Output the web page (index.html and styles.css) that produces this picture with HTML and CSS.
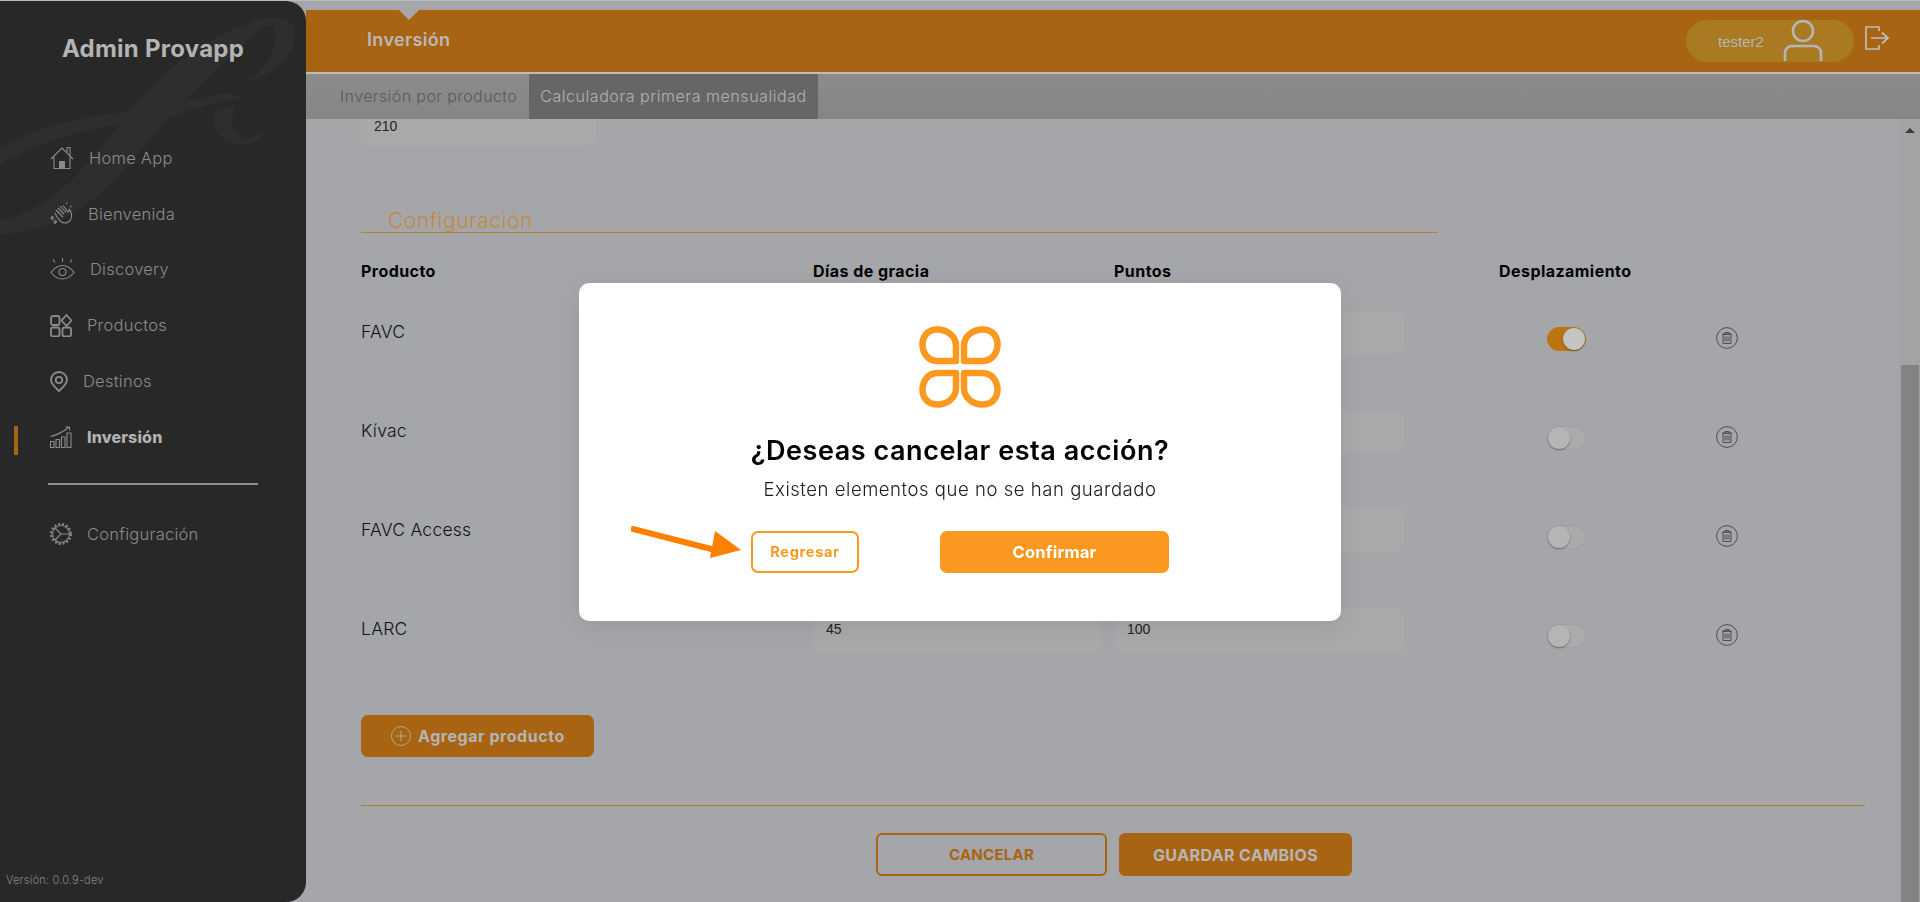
FILE: index.html
```html
<!DOCTYPE html>
<html lang="es">
<head>
<meta charset="utf-8">
<title>Admin Provapp</title>
<link rel="stylesheet" href="styles.css">
</head>
<body>
<div class="app">
  <aside class="sidebar">
    <svg class="watermark" width="306" height="260" viewBox="0 0 306 260" aria-hidden="true">
      <path d="M0 220C50 210 90 165 127 112C160 75 200 35 262 18C285 12 298 22 295 37C292 57 270 76 247 80C265 70 278 50 275 30C274 22 268 22 258 30C230 55 195 90 165 120C125 170 80 232 0 233Z"/>
      <path d="M0 147C45 120 110 112 170 105C195 98 215 92 228 92L247 97C225 100 200 105 168 117C125 122 60 128 0 163Z"/>
      <path d="M214 110C212 125 215 140 240 144C255 145 265 135 268 125C262 135 250 140 242 136C230 128 230 118 236 104Z"/>
    </svg>
    <h1 class="brand">Admin Provapp</h1>
    <nav class="nav">
      <a class="nav-item">
        <svg class="ico" width="24" height="24" viewBox="0 0 24 24"><path d="M1 13 12 2l11 11M4 11v11.500h16V11M17 6V1.500h3V9"/><path class="fill" d="M9 15h6v7.500H9z"/></svg>
        <span>Home App</span>
      </a>
      <a class="nav-item">
        <svg class="ico" width="23" height="23" viewBox="0 0 23 23"><path d="M8 6l6 6M6 8l7 7M10 4l6 6.500M13 3.500l5 6.500 1.500-2.500 2 4c1 5-2 9.500-6.500 9.500-3.500 0-5-2-8-6L5 11"/><path d="M2 14.500l-1 2 1.500 1 1-2zM5 18.500l-1 2 1.500 1 1-2zM16 2l1-1.500M20 5l1.500-1"/></svg>
        <span>Bienvenida</span>
      </a>
      <a class="nav-item">
        <svg class="ico" width="25" height="22" viewBox="0 0 25 22"><path d="M1 14.500C5 9 9 7.500 12.500 7.500S20 9 24 14.500C20 19.500 16 21 12.500 21S5 19.500 1 14.500Z"/><circle cx="12.500" cy="14" r="3.500"/><path d="M12.500 0v4M3 1.500l2 3M22 1.500l-2 3"/></svg>
        <span>Discovery</span>
      </a>
      <a class="nav-item">
        <svg class="ico ico-thick" width="22" height="23" viewBox="0 0 22 23"><rect x="1" y="2" width="8.500" height="9" rx="2"/><rect x="1" y="13.500" width="8.500" height="9" rx="2"/><rect x="12.500" y="13.500" width="8.500" height="9" rx="2"/><path d="M16.500 1 21.500 6.500 16.500 12 11.500 6.500Z"/></svg>
        <span>Productos</span>
      </a>
      <a class="nav-item">
        <svg class="ico ico-thick" width="18" height="21" viewBox="0 0 18 21"><path d="M9 20C5 16 1 13 1 9a8 8 0 0 1 16 0c0 4-4 7-8 11Z"/><circle cx="9" cy="9" r="3.200"/></svg>
        <span>Destinos</span>
      </a>
      <a class="nav-item is-active">
        <svg class="ico" width="22" height="22" viewBox="0 0 22 22"><path d="M.5 15.500h3.500v6H.5zM6 13.500h3.500v8H6zM11.500 11h3.500v10.500h-3.500zM17 7h4v14.500h-4z"/><path d="M.5 10.500C7 9 13 6 19 1M15.500 1H19.500V4.500"/></svg>
        <span>Inversión</span>
      </a>
      <div class="nav-rule"></div>
      <a class="nav-item">
        <svg class="ico" width="22" height="22" viewBox="0 0 22 22"><circle cx="11" cy="11" r="8.500"/><circle class="teeth" cx="11" cy="11" r="10"/><path d="M11 11 5 5M11 11 5 17M11 11h9"/></svg>
        <span>Configuración</span>
      </a>
    </nav>
    <p class="version">Versión: 0.0.9-dev</p>
  </aside>

  <main class="main">
    <header class="topbar">
      <span class="notch"></span>
      <h2 class="topbar-title">Inversión</h2>
      <div class="user-pill">
        <span class="user-name">tester2</span>
        <svg class="user-ico" width="40" height="42" viewBox="0 0 40 42"><circle cx="20" cy="12" r="10"/><path d="M2 42v-8c0-4 3-7 7-7h22c4 0 7 3 7 7v8"/></svg>
      </div>
      <svg class="logout" width="24" height="24" viewBox="0 0 24 24"><path d="M14 5V1H1v22h13v-4"/><path d="M6 12h16M17 6.500l6 5.500-6 5.500"/></svg>
    </header>
    <div class="tabs">
      <a class="tab">Inversión por producto</a>
      <a class="tab is-current">Calculadora primera mensualidad</a>
    </div>
    <div class="body-row">
      <section class="content">
        <div class="field field-top">210</div>
        <h3 class="section-title">Configuración</h3>
        <div class="table">
          <div class="th">Producto</div><div class="th">Días de gracia</div><div class="th">Puntos</div><div class="th">Desplazamiento</div><div class="th"></div>

          <div class="cell-name">FAVC</div><div class="field"></div><div class="field field-wide"></div>
          <div class="cell-toggle"><span class="toggle is-on"><i></i></span></div>
          <svg class="trash" width="22" height="22" viewBox="0 0 22 22"><circle cx="11" cy="11" r="10.400"/><path d="M6 7h10M9 7V5.500h4V7M7 7.500h8V16.500H7zM9 9.500v5M11 9.500v5M13 9.500v5"/></svg>

          <div class="cell-name">Kívac</div><div class="field"></div><div class="field field-wide"></div>
          <div class="cell-toggle"><span class="toggle"><i></i></span></div>
          <svg class="trash" width="22" height="22" viewBox="0 0 22 22"><circle cx="11" cy="11" r="10.400"/><path d="M6 7h10M9 7V5.500h4V7M7 7.500h8V16.500H7zM9 9.500v5M11 9.500v5M13 9.500v5"/></svg>

          <div class="cell-name">FAVC Access</div><div class="field"></div><div class="field field-wide"></div>
          <div class="cell-toggle"><span class="toggle"><i></i></span></div>
          <svg class="trash" width="22" height="22" viewBox="0 0 22 22"><circle cx="11" cy="11" r="10.400"/><path d="M6 7h10M9 7V5.500h4V7M7 7.500h8V16.500H7zM9 9.500v5M11 9.500v5M13 9.500v5"/></svg>

          <div class="cell-name">LARC</div><div class="field">45</div><div class="field field-wide">100</div>
          <div class="cell-toggle"><span class="toggle"><i></i></span></div>
          <svg class="trash" width="22" height="22" viewBox="0 0 22 22"><circle cx="11" cy="11" r="10.400"/><path d="M6 7h10M9 7V5.500h4V7M7 7.500h8V16.500H7zM9 9.500v5M11 9.500v5M13 9.500v5"/></svg>
        </div>
        <button class="btn-add">
          <svg width="20" height="20" viewBox="0 0 20 20"><circle cx="10" cy="10" r="9.500"/><path d="M10 4.500v11M4.500 10h11"/></svg>
          Agregar producto
        </button>
        <div class="rule"></div>
        <div class="actions">
          <button class="btn btn-outline">CANCELAR</button>
          <button class="btn btn-solid">GUARDAR CAMBIOS</button>
        </div>
      </section>
      <div class="scrollbar"><span class="scroll-up"></span><span class="scroll-thumb"></span></div>
    </div>
  </main>
</div>

<div class="backdrop">
  <div class="modal">
    <svg class="arrow" width="112" height="34" viewBox="0 0 112 34"><path d="M0 2.500 L88 25" /><path class="arrow-head" d="M84 5 110 24 79 32Z"/></svg>
    <svg class="logo" width="82" height="82" viewBox="0 0 82 82">
      <path d="M37 35H18.500C9 35 3.500 27 3.500 18.500C3.500 9.500 9.500 3.500 18.500 3.500C28 3.500 37 10 37 20Z"/>
      <path d="M45 35H63.500C73 35 78.500 27 78.500 18.500C78.500 9.500 72.500 3.500 63.500 3.500C54 3.500 45 10 45 20Z"/>
      <path d="M37 47H18.500C9 47 3.500 55 3.500 63.500C3.500 72.500 9.500 78.500 18.500 78.500C28 78.500 37 72 37 62Z"/>
      <path d="M45 47H63.500C73 47 78.500 55 78.500 63.500C78.500 72.500 72.500 78.500 63.500 78.500C54 78.500 45 72 45 62Z"/>
    </svg>
    <h2 class="modal-title">¿Deseas cancelar esta acción?</h2>
    <p class="modal-text">Existen elementos que no se han guardado</p>
    <div class="modal-actions">
      <button class="m-btn m-back">Regresar</button>
      <button class="m-btn m-confirm">Confirmar</button>
    </div>
  </div>
</div>
</body>
</html>
```
FILE: styles.css
```css
* { box-sizing: border-box; }
html, body { margin: 0; height: 100%; }
body {
  height: 902px;
  overflow: hidden;
  border-top: 1px solid #bcbcbc;
  background: #a5a6a9;
  font-family: Inter, "Noto Sans", sans-serif;
  color: #111;
}
h1, h2, h3, p { margin: 0; }
button { font-family: inherit; cursor: pointer; }

.app { display: flex; height: 901px; }

/* sidebar */
.sidebar {
  position: relative;
  flex: 0 0 306px;
  display: flex;
  flex-direction: column;
  background: #282828;
  border-radius: 0 20px 20px 0;
  overflow: hidden;
}
.watermark { position: absolute; left: 0; top: 0; }
.watermark path { fill: #2e2e2e; }
.brand {
  position: relative;
  padding-top: 34px;
  height: 129px;
  text-align: center;
  font-size: 24px;
  line-height: 28px;
  font-weight: 700;
  color: #b4b4b4;
  letter-spacing: .25px;
}
.nav { position: relative; padding-left: 50px; }
.nav-item {
  position: relative;
  display: flex;
  align-items: center;
  gap: 15px;
  height: 55.800px;
  font-size: 16.500px;
  font-weight: 300;
  color: #8c8c8c;
  letter-spacing: .25px;
}
.ico { fill: none; stroke: #8b8b8b; stroke-width: 1.100; flex: none; }
.ico-thick { stroke-width: 1.800; }
.ico .fill { fill: #8b8b8b; stroke: none; }
.ico .teeth { stroke-width: 2; stroke-dasharray: 2 2; }
.is-active { font-size: 16px; font-weight: 800; color: #b2b2b2; letter-spacing: .15px; }
.is-active::before {
  content: "";
  position: absolute;
  left: -36px;
  top: 17px;
  width: 4px;
  height: 29px;
  background: #a86412;
}
.nav-rule { width: 210px; height: 2px; margin: 18px 0 21px -2px; background: #8e8e8e; }
.version {
  position: relative;
  margin-top: auto;
  padding: 0 0 15px 6px;
  font-size: 11px;
  line-height: 14px;
  font-weight: 300;
  color: #858585;
  letter-spacing: .2px;
}

/* main */
.main { flex: 1; min-width: 0; display: flex; flex-direction: column; padding-top: 9px; }
.topbar {
  position: relative;
  flex: 0 0 64px;
  display: flex;
  align-items: center;
  padding: 0 31px 0 61px;
  background: #a86412;
  border-bottom: 2px solid #bdbdbd;
}
.notch {
  position: absolute;
  left: 93px;
  top: 0;
  width: 0;
  height: 0;
  border-left: 10px solid transparent;
  border-right: 10px solid transparent;
  border-top: 10px solid #a5a6a9;
}
.topbar-title { font-size: 18px; line-height: 24px; font-weight: 600; color: #b9b9b9; margin-top: -2px; letter-spacing: .35px; }
.user-pill {
  display: flex;
  align-items: flex-end;
  width: 168px;
  height: 42px;
  margin-left: auto;
  padding-left: 31px;
  border: 1px solid #aa800f;
  border-radius: 21px;
  background: #a97a22;
}
.user-name {
  align-self: center;
  width: 65px;
  font-family: "Liberation Sans", Arial, sans-serif;
  font-size: 15px;
  color: #b5b5b5;
}
.user-ico { fill: none; stroke: #b6b6b6; stroke-width: 2.600; }
.logout { margin: -6px 0 0 11px; fill: none; stroke: #bdbdbd; stroke-width: 1.700; }

.tabs {
  flex: 0 0 45px;
  display: flex;
  padding-left: 23px;
  background: linear-gradient(#8c8c8c, #858585);
  font-size: 16px;
  font-weight: 300;
  line-height: 45px;
  letter-spacing: .4px;
}
.tab { padding: 0 11px; color: #5a5a5a; }
.tab.is-current { margin-left: 1px; background: #666; color: #b2b2b2; letter-spacing: .55px; }

.body-row { flex: 1; min-height: 0; display: flex; }
.content { flex: 1; min-width: 0; overflow: hidden; padding-left: 55px; }

.field {
  width: 289px;
  height: 43px;
  padding-left: 13px;
  border-radius: 8px;
  background: #a9a9a9;
  font-family: "Liberation Sans", Arial, sans-serif;
  font-size: 14px;
  line-height: 43px;
  color: #222;
}
.field-top { width: 235px; height: 27px; border-radius: 0 0 8px 8px; line-height: 14px; }
.field-wide { width: 290px; }

.section-title {
  width: 1077px;
  margin-top: 64px;
  padding: 0 0 0 27px;
  border-bottom: 1px solid #b9802c;
  font-size: 21px;
  line-height: 22px;
  font-weight: 300;
  color: #c08a3e;
  letter-spacing: .55px;
}
.table {
  display: grid;
  grid-template-columns: 452px 301px 385px 217px 22px;
  grid-template-rows: 78px repeat(4, 99px);
}
.th { padding-top: 27px; font-size: 16px; line-height: 22px; font-weight: 700; color: #000; letter-spacing: .45px; }
.cell-name { font-size: 17.500px; line-height: 41px; font-weight: 300; color: #111; letter-spacing: .25px; }
.cell-toggle { padding: 16px 0 0 48px; }
.toggle {
  display: block;
  position: relative;
  width: 39px;
  height: 24px;
  border-radius: 12px;
  background: #ababab;
  border: 1px solid #9e9e9e;
}
.toggle i {
  position: absolute;
  left: 0;
  top: 0;
  width: 22px;
  height: 22px;
  border-radius: 50%;
  background: #b5b5b5;
  box-shadow: 0 1px 2px rgba(0, 0, 0, .35);
}
.toggle.is-on { background: #bd7412; border-color: #bd7412; }
.toggle.is-on i { left: 15px; background: #c4c4c4; }
.trash { margin-top: 16px; fill: none; stroke: #4f4f4f; stroke-width: 1; }

.btn-add {
  display: flex;
  align-items: center;
  gap: 7px;
  width: 233px;
  height: 42px;
  margin-top: 8px;
  padding: 0 0 0 30px;
  border: 0;
  border-radius: 7px;
  background: #a86412;
  font-size: 16px;
  font-weight: 700;
  color: #b5b5b5;
  letter-spacing: .55px;
}
.btn-add svg { fill: none; stroke: #b5b5b5; stroke-width: .8; flex: none; }
.rule { width: 1504px; height: 1px; margin-top: 48px; background: #b07a28; }
.actions { display: flex; gap: 12px; margin: 27px 0 0 515px; }
.btn {
  width: 231px;
  height: 43px;
  border-radius: 6px;
  font-size: 15px;
  font-weight: 700;
  letter-spacing: .25px;
}
.btn-outline { border: 2px solid #a86412; background: transparent; color: #a86412; }
.btn-solid { width: 233px; border: 0; background: #a86412; color: #b6b6b6; font-size: 16px; letter-spacing: .4px; }

.scrollbar {
  position: relative;
  flex: 0 0 21px;
  background: #a3a3a3;
}
.scroll-up {
  position: absolute;
  left: 6px;
  top: 9px;
  width: 0;
  height: 0;
  border-left: 5px solid transparent;
  border-right: 5px solid transparent;
  border-bottom: 5px solid #3a3a3a;
}
.scroll-thumb { position: absolute; left: 2px; right: 1px; top: 246px; bottom: 0; background: #838383; }

/* modal */
.backdrop {
  position: fixed;
  inset: 1px 0 0 0;
  display: flex;
  align-items: center;
  justify-content: center;
}
.modal {
  position: relative;
  width: 762px;
  height: 338px;
  padding-top: 43px;
  border-radius: 10px;
  background: #fff;
  box-shadow: 0 6px 24px rgba(0, 0, 0, .08);
  text-align: center;
}
.logo { display: block; margin: 0 auto; fill: none; stroke: #fa981f; stroke-width: 6.500; stroke-linejoin: round; }
.arrow { position: absolute; left: 52px; top: 243px; fill: none; stroke: #ff8000; stroke-width: 6; }
.arrow .arrow-head { fill: #ff8000; stroke: none; }
.modal-title { margin-top: 26px; font-size: 27px; line-height: 34px; font-weight: 600; color: #000; letter-spacing: .55px; }
.modal-text { margin-top: 9px; font-size: 18.500px; line-height: 24px; font-weight: 300; color: #1c1c1c; letter-spacing: .55px; }
.modal-actions { display: flex; justify-content: space-between; width: 418px; margin: 30px auto 0; }
.m-btn { height: 42px; border-radius: 7px; font-weight: 700; }
.m-back { width: 108px; border: 2px solid #fa981f; background: #fff; color: #fa981f; font-size: 14.500px; letter-spacing: .7px; }
.m-confirm { width: 229px; border: 0; background: #fa981f; color: #fff; font-size: 16.500px; letter-spacing: .2px; }
```
